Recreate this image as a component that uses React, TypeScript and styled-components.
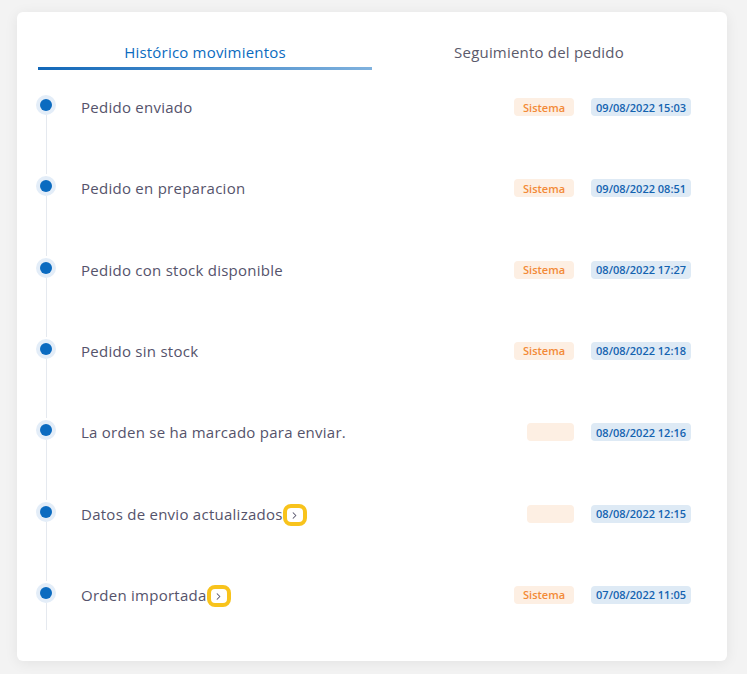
import React from "react"
import styled, { createGlobalStyle } from "styled-components"
import { ChevronRight } from "lucide-react"

const GlobalStyle = createGlobalStyle`
  body {
    margin: 0;
    background: #f3f3f3;
    font-family: "Open Sans", "Noto Sans", sans-serif;
  }
`

const Page = styled.div`
  padding: 12px 20px 13px 17px;
`

const Card = styled.div`
  width: 710px;
  height: 649px;
  box-sizing: border-box;
  background: #fff;
  border-radius: 6px;
  box-shadow: 0 2px 14px rgba(0, 0, 0, 0.07);
  padding: 30px 36px 0 19px;
`

const Tabs = styled.div`
  display: flex;
  margin: 0 -15px 0 2px;
`

const Tab = styled.div<{ $active?: boolean }>`
  flex: 1;
  text-align: center;
  font-size: 15px;
  line-height: 20px;
  letter-spacing: 0.2px;
  padding-bottom: 5px;
  color: ${p => (p.$active ? "#0b6bc0" : "#5b5a6b")};
  border-bottom: 3px solid transparent;
  border-image: ${p =>
    p.$active ? "linear-gradient(90deg, #1167b8, #80b2de) 1" : "none"};
`

const List = styled.div`
  margin-top: 23px;
`

const Row = styled.div<{ $last?: boolean }>`
  display: flex;
  align-items: flex-start;
  height: ${p => (p.$last ? "49px" : "81.33px")};
`

const Rail = styled.div`
  width: 20px;
  height: 100%;
  display: flex;
  flex-direction: column;
  align-items: center;
`

const Dot = styled.span`
  width: 20px;
  height: 20px;
  flex: none;
  margin-top: 2px;
  border-radius: 50%;
  background: #e3edf8;
  display: flex;
  align-items: center;
  justify-content: center;

  &::after {
    content: "";
    width: 12px;
    height: 12px;
    border-radius: 50%;
    background: #0b6bc0;
  }
`

const Line = styled.span`
  flex: 1;
  width: 1px;
  background: #e5e9ef;
`

const Content = styled.div`
  flex: 1;
  display: flex;
  align-items: center;
  height: 18px;
  margin: 5px 0 0 25px;
`

const Label = styled.div`
  flex: 1;
  display: flex;
  align-items: center;
  font-size: 15px;
  letter-spacing: 0.26px;
  color: #55536b;
`

const More = styled.span`
  display: inline-flex;
  align-items: center;
  justify-content: center;
  width: 24px;
  height: 22px;
  box-sizing: border-box;
  border: 4px solid #f8c31c;
  border-radius: 8px;
  color: #55536b;
  margin-top: 3px;
`

const Badges = styled.div`
  display: flex;
  align-items: center;
  gap: 17px;
`

const Badge = styled.span<{ $kind: "origin" | "date" }>`
  height: 18px;
  min-width: 47px;
  box-sizing: border-box;
  padding: ${p => (p.$kind === "date" ? "0 5px" : "0 9px")};
  border-radius: 4px;
  display: inline-flex;
  align-items: center;
  justify-content: center;
  font-size: 11px;
  font-weight: 600;
  background: ${p => (p.$kind === "date" ? "#deeaf5" : "#fdefe3")};
  color: ${p => (p.$kind === "date" ? "#1463b0" : "#f38a37")};
`

const events = [
  { label: "Pedido enviado", origin: "Sistema", date: "09/08/2022 15:03" },
  { label: "Pedido en preparacion", origin: "Sistema", date: "09/08/2022 08:51" },
  { label: "Pedido con stock disponible", origin: "Sistema", date: "08/08/2022 17:27" },
  { label: "Pedido sin stock", origin: "Sistema", date: "08/08/2022 12:18" },
  { label: "La orden se ha marcado para enviar.", origin: "", date: "08/08/2022 12:16" },
  { label: "Datos de envio actualizados", origin: "", date: "08/08/2022 12:15", more: true },
  { label: "Orden importada", origin: "Sistema", date: "07/08/2022 11:05", more: true },
]

export default function App() {
  return (
    <>
      <GlobalStyle />
      <Page>
        <Card>
          <Tabs>
            <Tab $active>Histórico movimientos</Tab>
            <Tab>Seguimiento del pedido</Tab>
          </Tabs>
          <List>
            {events.map((ev, i) => (
              <Row key={i} $last={i === events.length - 1}>
                <Rail>
                  <Dot />
                  <Line />
                </Rail>
                <Content>
                  <Label>
                    {ev.label}
                    {ev.more && (
                      <More>
                        <ChevronRight size={11} strokeWidth={2.2} />
                      </More>
                    )}
                  </Label>
                  <Badges>
                    <Badge $kind="origin">{ev.origin}</Badge>
                    <Badge $kind="date">{ev.date}</Badge>
                  </Badges>
                </Content>
              </Row>
            ))}
          </List>
        </Card>
      </Page>
    </>
  )
}
